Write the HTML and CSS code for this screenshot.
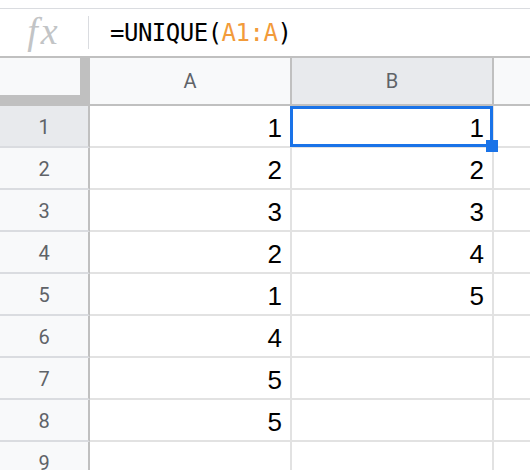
FILE: index.html
```html
<!DOCTYPE html>
<html lang="en">
<head>
	<meta charset="UTF-8">
	<title>UNIQUE</title>
	<link rel="stylesheet" href="styles.css">
</head>
<body>
	<div class="formula-bar">
		<div class="fx">fx</div>
		<div class="sep"></div>
		<div class="formula">=UNIQUE(<span class="ref">A1:A</span>)</div>
	</div>
	<div class="grid">
		<div class="corner"></div>
		<div class="col-head">A</div>
		<div class="col-head active">B</div>
		<div class="col-head last"></div>

		<div class="rh active">1</div>
		<div class="cell">1</div>
		<div class="cell sel">1<i class="sel-box"></i><i class="handle"></i></div>
		<div class="cell last"></div>

		<div class="rh">2</div>
		<div class="cell">2</div>
		<div class="cell">2</div>
		<div class="cell last"></div>

		<div class="rh">3</div>
		<div class="cell">3</div>
		<div class="cell">3</div>
		<div class="cell last"></div>

		<div class="rh">4</div>
		<div class="cell">2</div>
		<div class="cell">4</div>
		<div class="cell last"></div>

		<div class="rh">5</div>
		<div class="cell">1</div>
		<div class="cell">5</div>
		<div class="cell last"></div>

		<div class="rh">6</div>
		<div class="cell">4</div>
		<div class="cell"></div>
		<div class="cell last"></div>

		<div class="rh">7</div>
		<div class="cell">5</div>
		<div class="cell"></div>
		<div class="cell last"></div>

		<div class="rh">8</div>
		<div class="cell">5</div>
		<div class="cell"></div>
		<div class="cell last"></div>

		<div class="rh">9</div>
		<div class="cell"></div>
		<div class="cell"></div>
		<div class="cell last"></div>
	</div>
</body>
</html>
```

FILE: styles.css
```css
*{margin:0;padding:0;box-sizing:border-box;}
body{width:530px;height:470px;overflow:hidden;background:#fff;padding-top:8px;}

/* formula bar */
.formula-bar{display:flex;align-items:center;height:50px;border-top:1px solid #dadce0;border-bottom:2px solid #c0c0c0;}
.fx{width:88px;text-align:center;padding-bottom:4px;font-family:"Liberation Serif",serif;font-style:italic;font-size:38px;letter-spacing:3px;color:#c2c4c6;}
.sep{width:1px;height:33px;background:#dadce0;}
.formula{margin-left:21px;font-family:"DejaVu Sans Mono",monospace;font-size:24px;letter-spacing:-0.5px;color:#000;}
.formula .ref{color:#f29b3a;}

/* grid */
.grid{display:grid;grid-template-columns:90px 202px 202px 1fr;grid-template-rows:48px repeat(9,42px);}
.corner{background:#f8f9fa;border-right:10px solid #c0c0c0;border-bottom:11px solid #c0c0c0;}
.col-head{background:#f8f9fa;border-right:2px solid #c0c0c0;border-bottom:2px solid #c0c0c0;text-align:center;line-height:46px;font-family:Roboto,"Liberation Sans",sans-serif;font-size:20px;color:#5f6368;}
.col-head.active{background:#e8eaed;}
.col-head.last{border-right:none;}
.rh{background:#f8f9fa;border-right:2px solid #c0c0c0;border-bottom:2px solid #dadce0;text-align:center;padding-top:3px;line-height:37px;font-family:Roboto,"Liberation Sans",sans-serif;font-size:20px;color:#5f6368;}
.rh.active{background:#e8eaed;}
.cell{border-right:2px solid #e2e2e2;border-bottom:2px solid #e2e2e2;text-align:right;padding-right:8px;padding-top:4px;line-height:36px;font-family:"Liberation Sans",Arial,sans-serif;font-size:26px;color:#000;}
.cell.last{border-right:none;}

/* selection */
.sel{position:relative;}
.sel-box{position:absolute;left:-2px;top:0;width:203px;height:41px;border:3px solid #1a73e8;}
.handle{position:absolute;left:194px;top:34px;width:12px;height:12px;background:#1a73e8;}
```
